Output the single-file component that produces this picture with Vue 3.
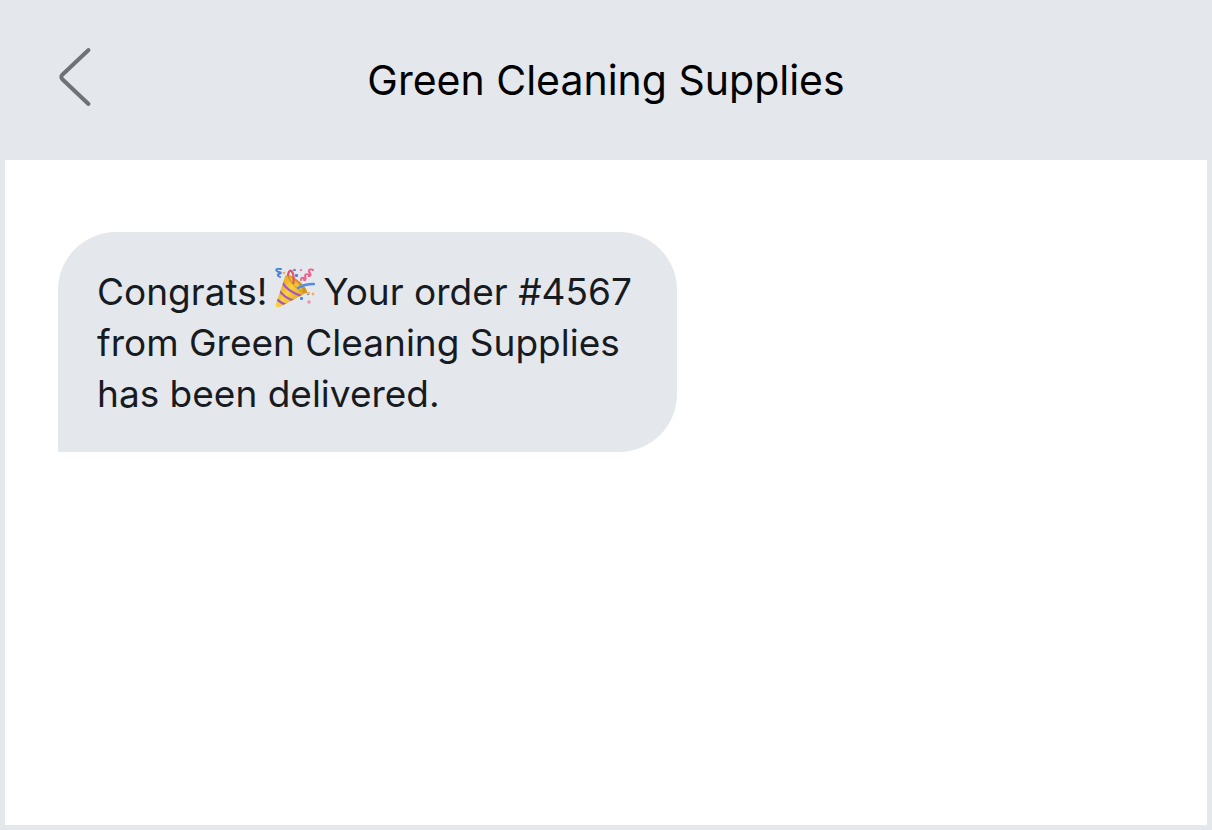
<script setup>
const sender = 'Green Cleaning Supplies'
const orderNumber = '#4567'
</script>

<template>
  <main class="phone">
    <header class="bar">
      <button class="back" type="button" aria-label="Back">
        <svg viewBox="0 0 34 60" aria-hidden="true">
          <path d="M30.500 3 4.600 27.500Q2 30 4.600 32.500L30.500 57" />
        </svg>
      </button>
      <h1 class="title">{{ sender }}</h1>
    </header>
    <section class="thread" aria-label="Messages">
      <p class="bubble">
        <span class="line">
          <span>Congrats!</span>
          <svg class="popper" viewBox="0 0 40 40" role="img" aria-label="Party popper">
            <defs>
              <linearGradient id="cone" x1="0" y1="0.300" x2="0.800" y2="0.900">
                <stop offset="0" stop-color="#e39c22" />
                <stop offset="0.450" stop-color="#fbd33c" />
                <stop offset="1" stop-color="#d99a20" />
              </linearGradient>
              <clipPath id="cone-shape">
                <path d="M10.500 7.500C15 5 32 18 32 24.500L4.500 39C2 40 0 38.500 1 36Z" />
              </clipPath>
            </defs>
            <path d="M10.500 7.500C15 5 32 18 32 24.500L4.500 39C2 40 0 38.500 1 36Z" fill="url(#cone)" />
            <g clip-path="url(#cone-shape)" fill="none" stroke="#a457c4" stroke-width="2.300">
              <path d="M7 14Q12 23 26 28" />
              <path d="M4 22Q9 30 20 33" />
              <path d="M1 30Q5 35 12 37" />
            </g>
            <path d="M12 7C17 6 32 18 32 24.500C28 27 14 16 12 7Z" fill="#cf9422" />
            <path d="M14 8Q24 14 28 23Q18 20 14 8Z" fill="#f0bf35" />
            <g fill="none" stroke-linecap="round">
              <path d="M13 7C14 0 19.500 1 18.500 15" stroke="#ea4f6b" stroke-width="2.200" />
              <path d="M23 20Q29 16 39 16" stroke="#538ce6" stroke-width="2.400" />
              <path d="M6 1C0 0 0 3 4 4Q8 5 4 6Q1 7 5 9" stroke="#4c82dc" stroke-width="1.900" />
              <path d="M26 12C26 9 30 9 29 12C31 13 31 9 30 8C30 5 34 6 34 8C37 8 35 5 34 4C33 1 37 1 38 2" stroke="#eb6389" stroke-width="1.900" />
            </g>
            <g fill="#4c86df">
              <rect x="18" y="1" width="3" height="2" rx="1" />
              <rect x="20" y="6" width="3" height="3" rx="1" />
              <rect x="25" y="29" width="3" height="3" rx="1" />
              <circle cx="33" cy="26" r="1.200" />
            </g>
            <g fill="#f2ad55">
              <circle cx="9" cy="5" r="1.300" />
              <rect x="32" y="24" width="3" height="2.500" rx="1" />
              <circle cx="38" cy="26" r="1.400" />
            </g>
            <circle cx="26" cy="2" r="1.100" fill="#ec6b8f" />
            <circle cx="34" cy="34" r="1.700" fill="#f18daa" />
          </svg>
          <span>Your order {{ orderNumber }}</span>
        </span>
        <span>from {{ sender }} has been delivered.</span>
      </p>
    </section>
  </main>
</template>

<style>
body {
  margin: 0;
}
</style>

<style scoped>
.phone {
  box-sizing: border-box;
  min-height: 100vh;
  display: flex;
  flex-direction: column;
  padding: 0 5px 5px;
  background: #e4e7ec;
  font-family: Inter, "Liberation Sans", sans-serif;
}

.bar {
  display: grid;
  grid-template-columns: 64px 1fr 64px;
  align-items: center;
  height: 160px;
  padding: 0 38px;
}

.back {
  display: flex;
  justify-content: center;
  width: 64px;
  padding: 0 0 6px;
  border: 0;
  background: none;
  cursor: pointer;
}

.back svg {
  width: 34px;
  height: 60px;
  fill: none;
  stroke: #6d7178;
  stroke-width: 4;
  stroke-linecap: round;
  stroke-linejoin: round;
}

.title {
  margin: 0;
  color: #000;
  font-size: 41px;
  font-weight: 400;
  line-height: 52px;
  text-align: center;
}

.thread {
  flex: 1;
  padding: 72px 53px;
  background: #fff;
}

.bubble {
  box-sizing: border-box;
  max-width: 619px;
  margin: 0;
  padding: 34px 32px 33px 39px;
  border-radius: 58px 58px 58px 0;
  background: #e4e7ec;
  color: #171b1f;
  font-size: 37px;
  line-height: 51px;
}

.line {
  display: flex;
  flex-wrap: wrap;
  column-gap: 8px;
}

.popper {
  width: 40px;
  height: 40px;
  margin-top: 2px;
}
</style>
